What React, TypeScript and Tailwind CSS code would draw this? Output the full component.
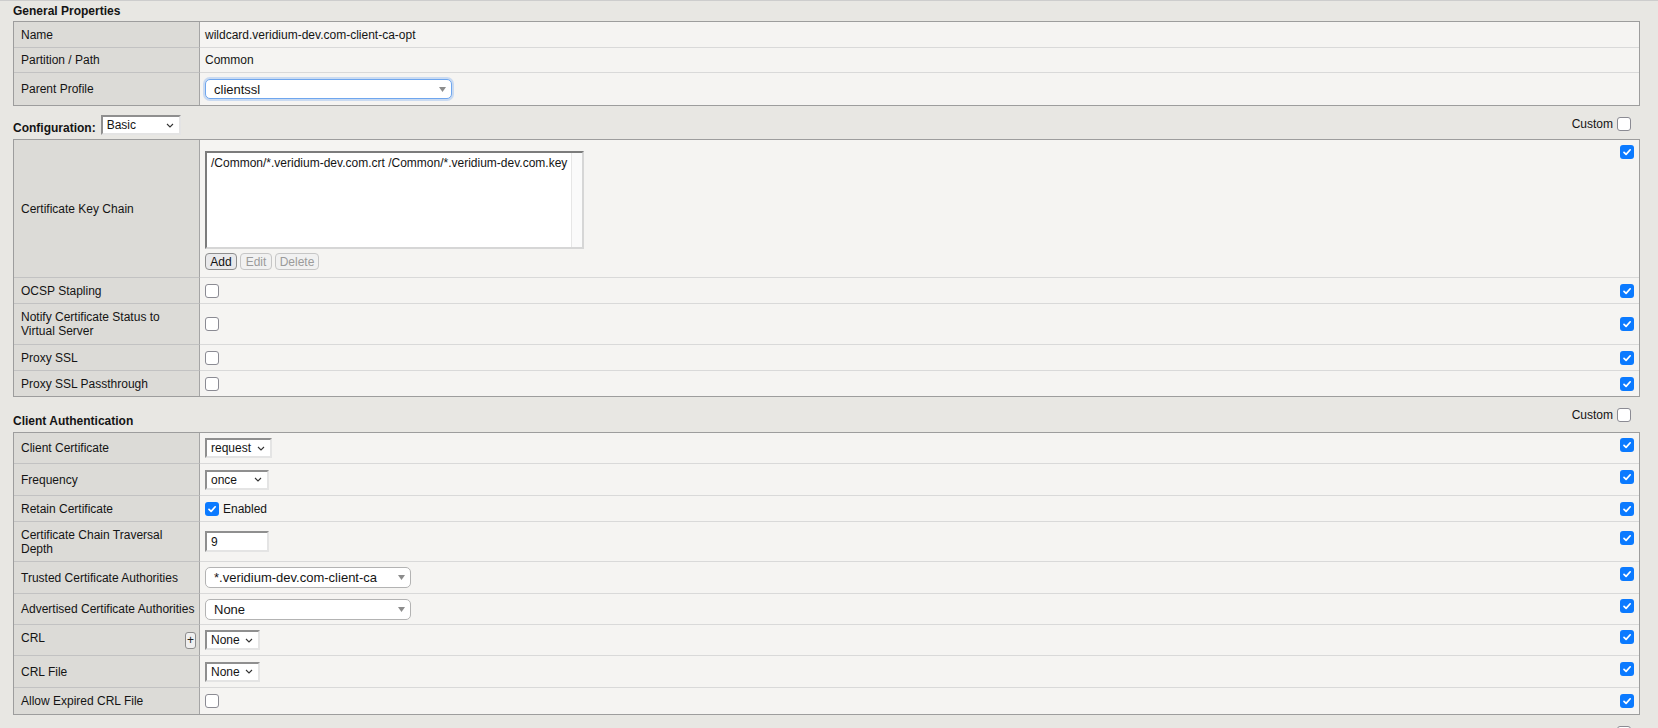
import React from "react";

const BlueCheck = () => (
  <div className="w-[14px] h-[14px] shrink-0 rounded-[3px] bg-[#0b7aff] flex items-center justify-center">
    <svg width="10" height="10" viewBox="0 0 10 10">
      <path d="M2 5.3 L4.1 7.4 L8.2 2.8" fill="none" stroke="#ffffff" strokeWidth="1.7" strokeLinecap="round" strokeLinejoin="round" />
    </svg>
  </div>
);

const EmptyCheck = () => (
  <div className="w-[14px] h-[14px] shrink-0 rounded-[3px] bg-white border-[1.5px] border-[#8b8b93]" />
);

const Chevron = () => (
  <svg width="8" height="5" viewBox="0 0 8 5">
    <path d="M1 1 L4 4 L7 1" fill="none" stroke="#333333" strokeWidth="1.1" />
  </svg>
);

const Tri = () => (
  <svg width="7" height="5" viewBox="0 0 7 5">
    <path d="M0 0 H7 L3.5 5 Z" fill="#8c8c8c" />
  </svg>
);

function SqSelect({ text, className }: { text: string; className: string }) {
  return (
    <div
      className={`${className} h-[20px] bg-white border-2 border-t-[#8f8f8f] border-l-[#8f8f8f] border-r-[#e4e4e4] border-b-[#e4e4e4] flex items-center justify-between pl-[4px] pr-[5px] text-[12px] leading-[14px]`}
    >
      <span>{text}</span>
      <Chevron />
    </div>
  );
}

function RSelect({ text, className, focus }: { text: string; className: string; focus?: boolean }) {
  return (
    <div
      className={`${className} bg-white rounded-[5px] border flex items-center justify-between pl-[8px] pr-[5px] text-[13px] leading-[15px] ${
        focus ? "border-[#6fa6ee] shadow-[0_0_0_2px_rgba(120,170,240,0.35)]" : "border-[#b3b3b3]"
      }`}
    >
      <span>{text}</span>
      <Tri />
    </div>
  );
}

type RowProps = {
  label: React.ReactNode;
  h: string;
  first?: boolean;
  check?: boolean;
  children?: React.ReactNode;
  plus?: boolean;
};

function Row({ label, h, first, check, children, plus }: RowProps) {
  return (
    <div className={`flex ${h}`}>
      <div
        className={`w-[186px] shrink-0 bg-[#dcdbd7] border-r border-r-[#a5a5a5] pl-[7px] pr-[3px] flex items-center justify-between whitespace-nowrap leading-[14px] ${
          first ? "" : "border-t border-t-[#c2c2c2]"
        }`}
      >
        <span className={plus ? "mb-[5px]" : ""}>{label}</span>
        {plus && (
          <div className="w-[11px] h-[17px] rounded-[3px] border border-[#8d8d8d] bg-[#efefef] flex items-center justify-center text-[12px] leading-none text-[#222]">
            +
          </div>
        )}
      </div>
      <div
        className={`flex-1 min-w-0 bg-[#f5f4f2] pl-[5px] pr-[5px] flex items-center ${
          first ? "" : "border-t border-t-[#d9d9d9]"
        }`}
      >
        <div className="flex w-full items-start justify-between">
          <div className="flex items-center leading-[14px]">{children}</div>
          {check && <BlueCheck />}
        </div>
      </div>
    </div>
  );
}

function Custom({ noText }: { noText?: boolean }) {
  return (
    <div className="flex items-center gap-[4px] mt-[11px] mr-[9px] self-start">
      {noText ? <div className="w-[41px] h-[14px]" /> : <span className="leading-[14px]">Custom</span>}
      <EmptyCheck />
    </div>
  );
}

export default function App() {
  return (
    <div className="min-h-screen bg-[#e8e7e3] border-t border-[#cdcdcd] pl-[13px] pr-[18px] text-[12px] text-[#141414] font-['Liberation_Sans',Arial,Helvetica,sans-serif]">
      <div className="h-[20px] flex items-center font-bold leading-[14px]">General Properties</div>

      <div className="border border-[#9d9d9d]">
        <Row label="Name" h="h-[25px]" first>
          wildcard.veridium-dev.com-client-ca-opt
        </Row>
        <Row label="Partition / Path" h="h-[25px]">
          Common
        </Row>
        <Row label="Parent Profile" h="h-[33px]">
          <RSelect text="clientssl" className="w-[247px] h-[20px]" focus />
        </Row>
      </div>

      <div className="flex justify-between h-[33px]">
        <div className="flex items-end gap-[5px] pb-[4px]">
          <span className="font-bold leading-[14px]">Configuration:</span>
          <SqSelect text="Basic" className="w-[80px]" />
        </div>
        <Custom />
      </div>

      <div className="border border-[#9d9d9d]">
        <div className="flex h-[137px]">
          <div className="w-[186px] shrink-0 bg-[#dcdbd7] border-r border-r-[#a5a5a5] pl-[7px] flex items-center leading-[14px]">
            Certificate Key Chain
          </div>
          <div className="flex-1 min-w-0 bg-[#f5f4f2] pl-[5px] pr-[5px] flex items-start justify-between">
            <div className="flex flex-col pt-[11px]">
              <div className="w-[379px] h-[98px] bg-white border-2 border-t-[#7c7c7c] border-l-[#7c7c7c] border-r-[#d6d6d6] border-b-[#d6d6d6] flex">
                <div className="flex-1 pl-[4px] pt-[3px] leading-[14px] whitespace-nowrap">
                  /Common/*.veridium-dev.com.crt /Common/*.veridium-dev.com.key
                </div>
                <div className="w-[11px] bg-[#fafafa] border-l border-[#e6e6e6]" />
              </div>
              <div className="flex gap-[3px] mt-[4px]">
                <div className="w-[32px] h-[17px] rounded-[4px] border border-[#8e8e8e] bg-[#e9e9eb] text-[#111] flex items-center justify-center leading-none">
                  Add
                </div>
                <div className="w-[32px] h-[17px] rounded-[4px] border border-[#c6c6c6] bg-[#f1f1f1] text-[#9b9b9b] flex items-center justify-center leading-none">
                  Edit
                </div>
                <div className="w-[44px] h-[17px] rounded-[4px] border border-[#c6c6c6] bg-[#f1f1f1] text-[#9b9b9b] flex items-center justify-center leading-none">
                  Delete
                </div>
              </div>
            </div>
            <div className="mt-[5px]">
              <BlueCheck />
            </div>
          </div>
        </div>
        <Row label="OCSP Stapling" h="h-[26px]" check>
          <EmptyCheck />
        </Row>
        <Row
          label={
            <>
              Notify Certificate Status to
              <br />
              Virtual Server
            </>
          }
          h="h-[41px]"
          check
        >
          <EmptyCheck />
        </Row>
        <Row label="Proxy SSL" h="h-[26px]" check>
          <EmptyCheck />
        </Row>
        <Row label="Proxy SSL Passthrough" h="h-[26px]" check>
          <EmptyCheck />
        </Row>
      </div>

      <div className="flex justify-between h-[35px]">
        <div className="flex items-end pb-[4px]">
          <span className="font-bold leading-[14px]">Client Authentication</span>
        </div>
        <Custom />
      </div>

      <div className="border border-[#9d9d9d]">
        <Row label="Client Certificate" h="h-[30px]" first check>
          <SqSelect text="request" className="w-[67px]" />
        </Row>
        <Row label="Frequency" h="h-[32px]" check>
          <SqSelect text="once" className="w-[64px]" />
        </Row>
        <Row label="Retain Certificate" h="h-[26px]" check>
          <BlueCheck />
          <span className="ml-[4px]">Enabled</span>
        </Row>
        <Row
          label={
            <>
              Certificate Chain Traversal
              <br />
              Depth
            </>
          }
          h="h-[40px]"
          check
        >
          <div className="w-[64px] h-[21px] bg-white border-2 border-t-[#8f8f8f] border-l-[#8f8f8f] border-r-[#e4e4e4] border-b-[#e4e4e4] flex items-center pl-[4px] leading-[14px]">
            9
          </div>
        </Row>
        <Row label="Trusted Certificate Authorities" h="h-[32px]" check>
          <RSelect text="*.veridium-dev.com-client-ca" className="w-[206px] h-[21px]" />
        </Row>
        <Row label="Advertised Certificate Authorities" h="h-[31px]" check>
          <RSelect text="None" className="w-[206px] h-[21px]" />
        </Row>
        <Row label="CRL" h="h-[31px]" check plus>
          <SqSelect text="None" className="w-[55px]" />
        </Row>
        <Row label="CRL File" h="h-[32px]" check>
          <SqSelect text="None" className="w-[55px]" />
        </Row>
        <Row label="Allow Expired CRL File" h="h-[27px]" check>
          <EmptyCheck />
        </Row>
      </div>

      <div className="flex justify-end h-[35px]">
        <Custom noText />
      </div>
    </div>
  );
}
